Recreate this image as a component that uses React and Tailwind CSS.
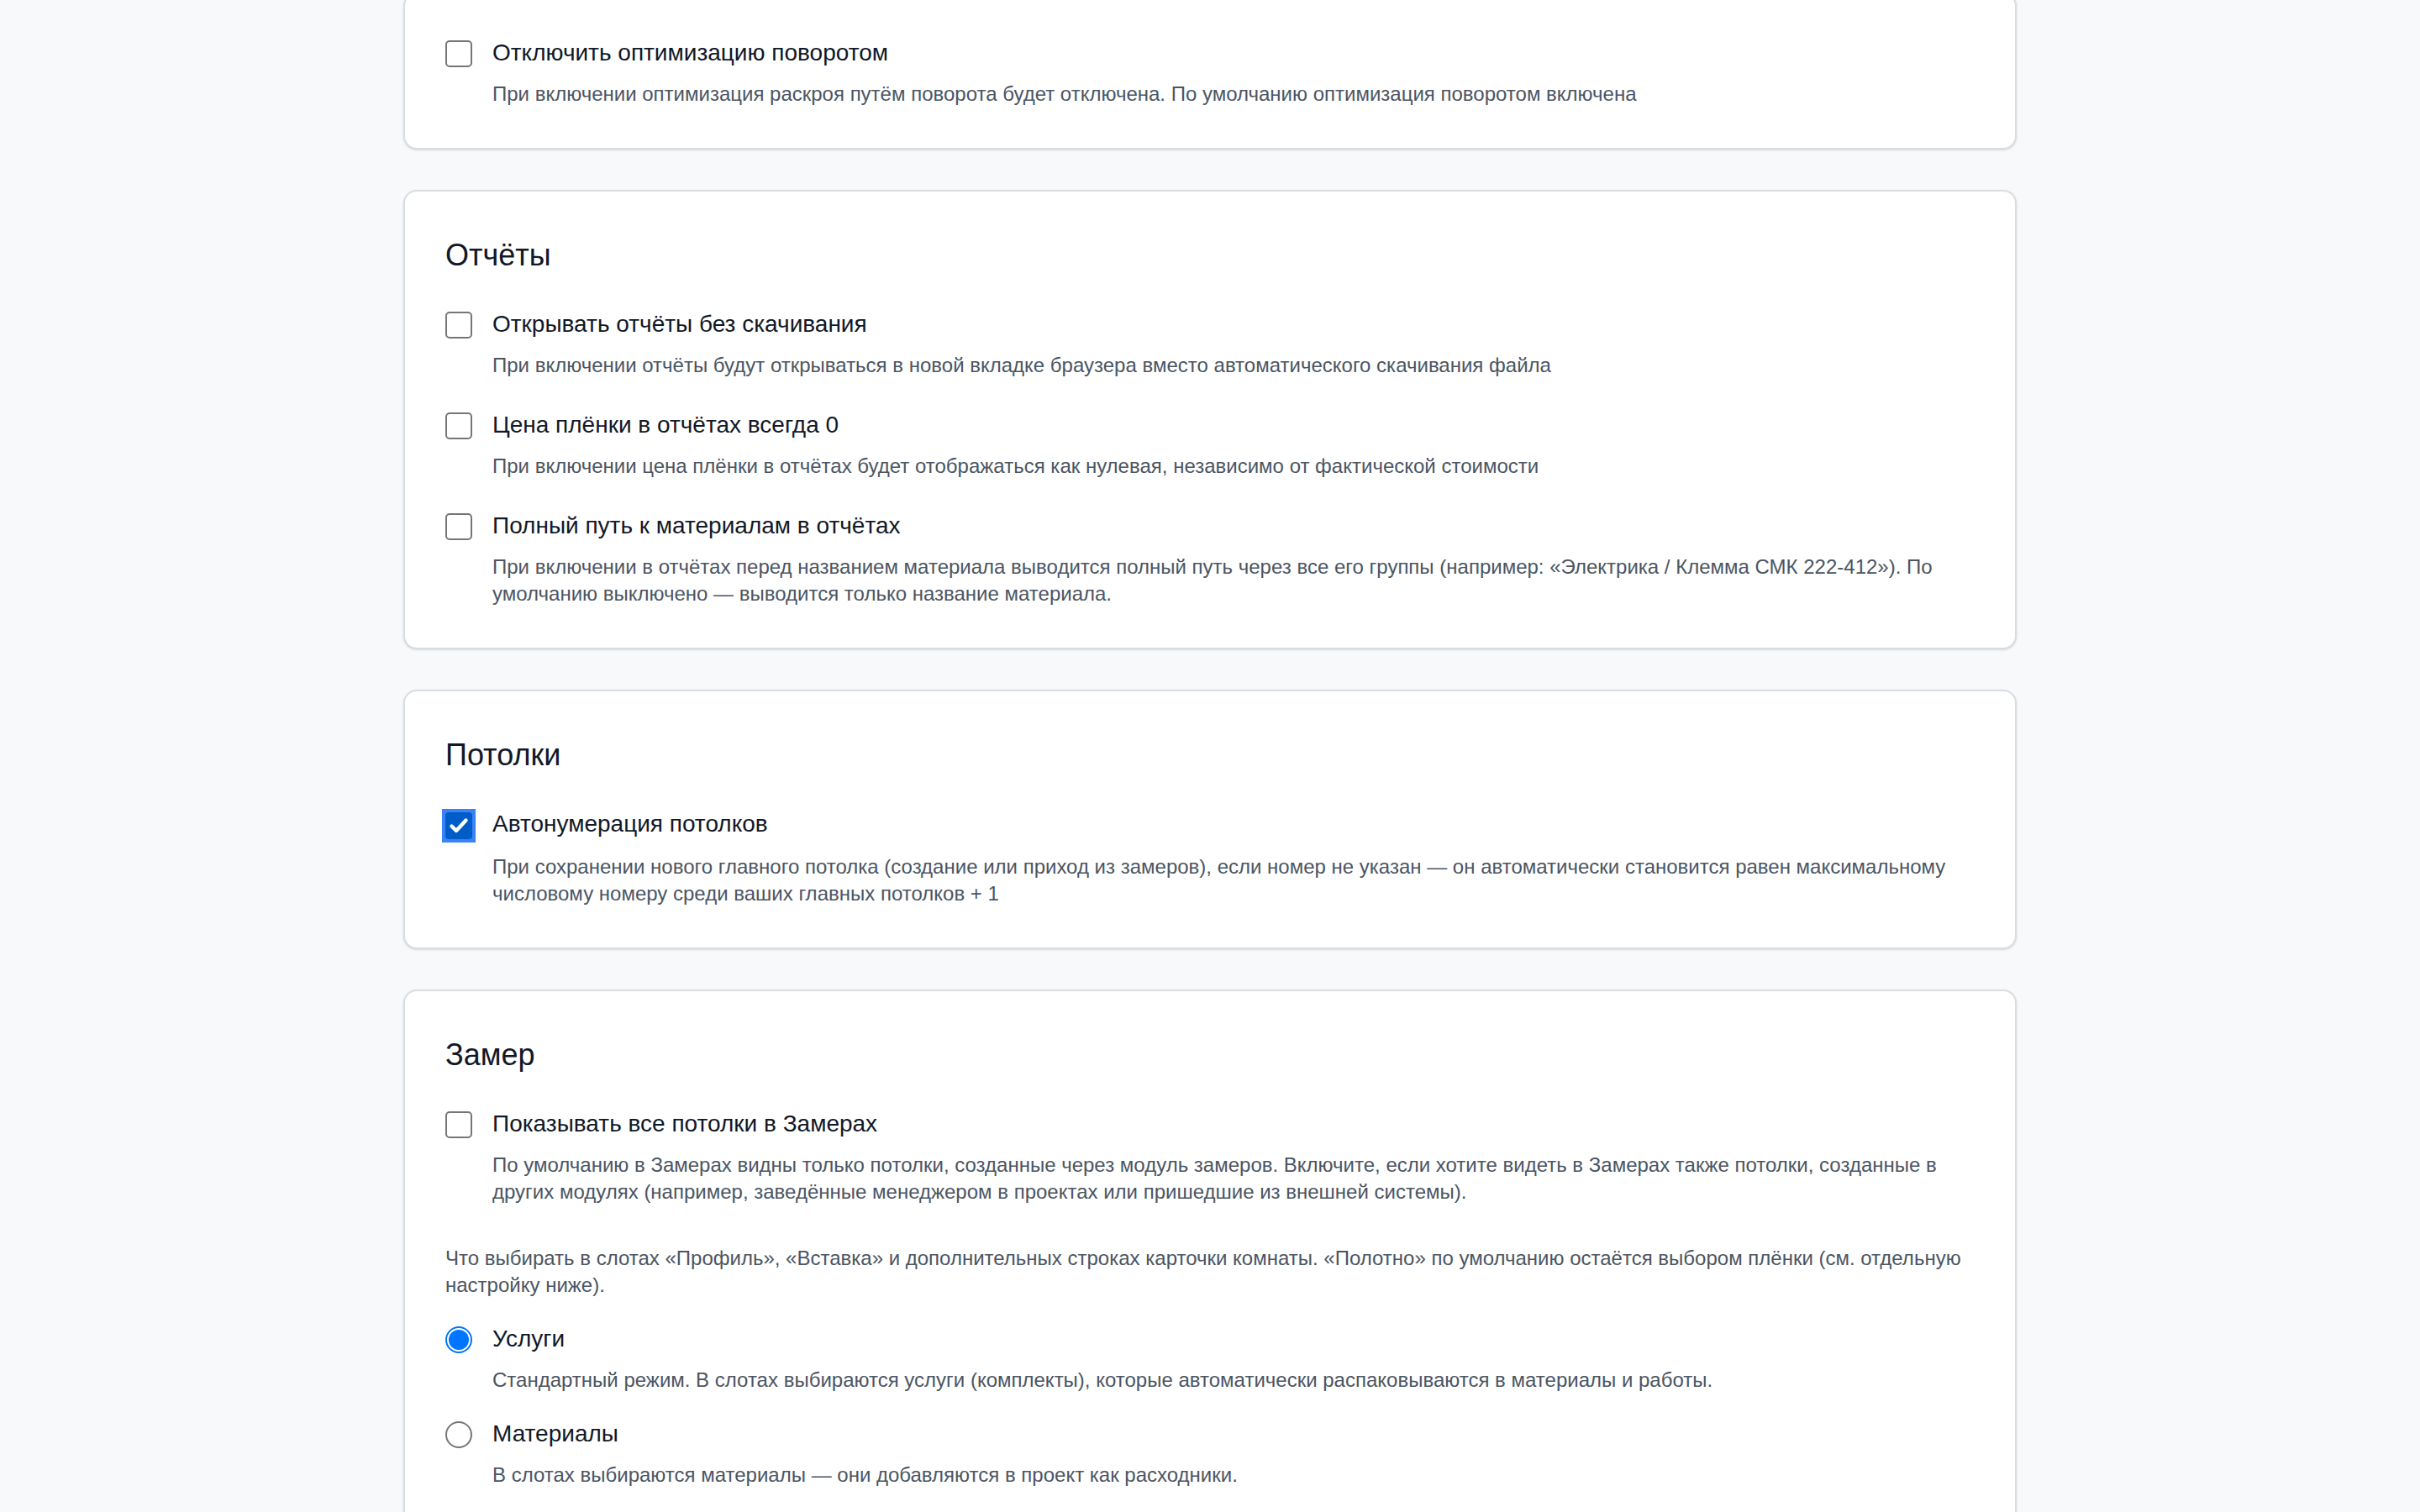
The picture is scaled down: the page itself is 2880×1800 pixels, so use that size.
import React from "react";

const font = { fontFamily: '"Liberation Sans", Arial, sans-serif' };

function Checkbox({ checked }) {
  if (checked) {
    return (
      <div className="mt-[4px] -ml-[4px] -mr-[4px] flex h-[40px] w-[40px] shrink-0 items-center justify-center bg-[#3b82f6]">
        <div className="flex h-[32px] w-[32px] items-center justify-center rounded-[4px] bg-[#005cc8]">
          <svg width="26" height="26" viewBox="0 0 26 26">
            <path d="M4.5 13.5 L10 19 L21.5 6.5" fill="none" stroke="white" strokeWidth="4.4" strokeLinecap="round" strokeLinejoin="round" />
          </svg>
        </div>
      </div>
    );
  }
  return <div className="mt-[7px] h-[32px] w-[32px] shrink-0 rounded-[5px] border-2 border-[#767676] bg-white" />;
}

function Radio({ checked }) {
  if (checked) {
    return (
      <div className="mt-[7px] flex h-[32px] w-[32px] shrink-0 items-center justify-center rounded-full border-2 border-[#0075ff] bg-white p-[2px]">
        <div className="h-full w-full rounded-full bg-[#0075ff]" />
      </div>
    );
  }
  return <div className="mt-[7px] h-[32px] w-[32px] shrink-0 rounded-full border-2 border-[#767676] bg-white" />;
}

function Option({ control, label, desc }) {
  return (
    <div className="flex flex-col">
      <div className="flex items-start gap-[24px]">
        {control}
        <span className="pt-[2px] text-[28px] leading-[40px] text-[#111827]">{label}</span>
      </div>
      <p className="mt-[13px] pl-[56px] text-[24px] leading-[32px] text-[#4b5563]">{desc}</p>
    </div>
  );
}

function Card({ title, children, className = "" }) {
  return (
    <section className={"rounded-[16px] border-2 border-[#d9dce1] bg-white p-[48px] shadow-sm " + className}>
      {title && <h2 className="mb-[32px] text-[36px] leading-[56px] text-[#111827]">{title}</h2>}
      {children}
    </section>
  );
}

export default function App() {
  return (
    <div className="min-h-screen overflow-hidden bg-[#f8f9fb]" style={font}>
      <div className="mx-auto flex w-[1920px] flex-col gap-[48px]">
        <Card className="-mt-[9px]">
          <Option
            control={<Checkbox />}
            label="Отключить оптимизацию поворотом"
            desc="При включении оптимизация раскроя путём поворота будет отключена. По умолчанию оптимизация поворотом включена"
          />
        </Card>

        <Card title="Отчёты">
          <div className="flex flex-col gap-[33px]">
            <Option
              control={<Checkbox />}
              label="Открывать отчёты без скачивания"
              desc="При включении отчёты будут открываться в новой вкладке браузера вместо автоматического скачивания файла"
            />
            <Option
              control={<Checkbox />}
              label="Цена плёнки в отчётах всегда 0"
              desc="При включении цена плёнки в отчётах будет отображаться как нулевая, независимо от фактической стоимости"
            />
            <Option
              control={<Checkbox />}
              label="Полный путь к материалам в отчётах"
              desc="При включении в отчётах перед названием материала выводится полный путь через все его группы (например: «Электрика / Клемма СМК 222-412»). По умолчанию выключено — выводится только название материала."
            />
          </div>
        </Card>

        <Card title="Потолки">
          <Option
            control={<Checkbox checked />}
            label="Автонумерация потолков"
            desc="При сохранении нового главного потолка (создание или приход из замеров), если номер не указан — он автоматически становится равен максимальному числовому номеру среди ваших главных потолков + 1"
          />
        </Card>

        <Card title="Замер" className="mb-[40px]">
          <Option
            control={<Checkbox />}
            label="Показывать все потолки в Замерах"
            desc="По умолчанию в Замерах видны только потолки, созданные через модуль замеров. Включите, если хотите видеть в Замерах также потолки, созданные в других модулях (например, заведённые менеджером в проектах или пришедшие из внешней системы)."
          />
          <p className="mt-[47px] text-[24px] leading-[32px] text-[#4b5563]">
            Что выбирать в слотах «Профиль», «Вставка» и дополнительных строках карточки комнаты. «Полотно» по умолчанию остаётся выбором плёнки (см. отдельную настройку ниже).
          </p>
          <div className="mt-[26px] flex flex-col gap-[26px]">
            <Option
              control={<Radio checked />}
              label="Услуги"
              desc="Стандартный режим. В слотах выбираются услуги (комплекты), которые автоматически распаковываются в материалы и работы."
            />
            <Option
              control={<Radio />}
              label="Материалы"
              desc="В слотах выбираются материалы — они добавляются в проект как расходники."
            />
          </div>
        </Card>
      </div>
    </div>
  );
}
